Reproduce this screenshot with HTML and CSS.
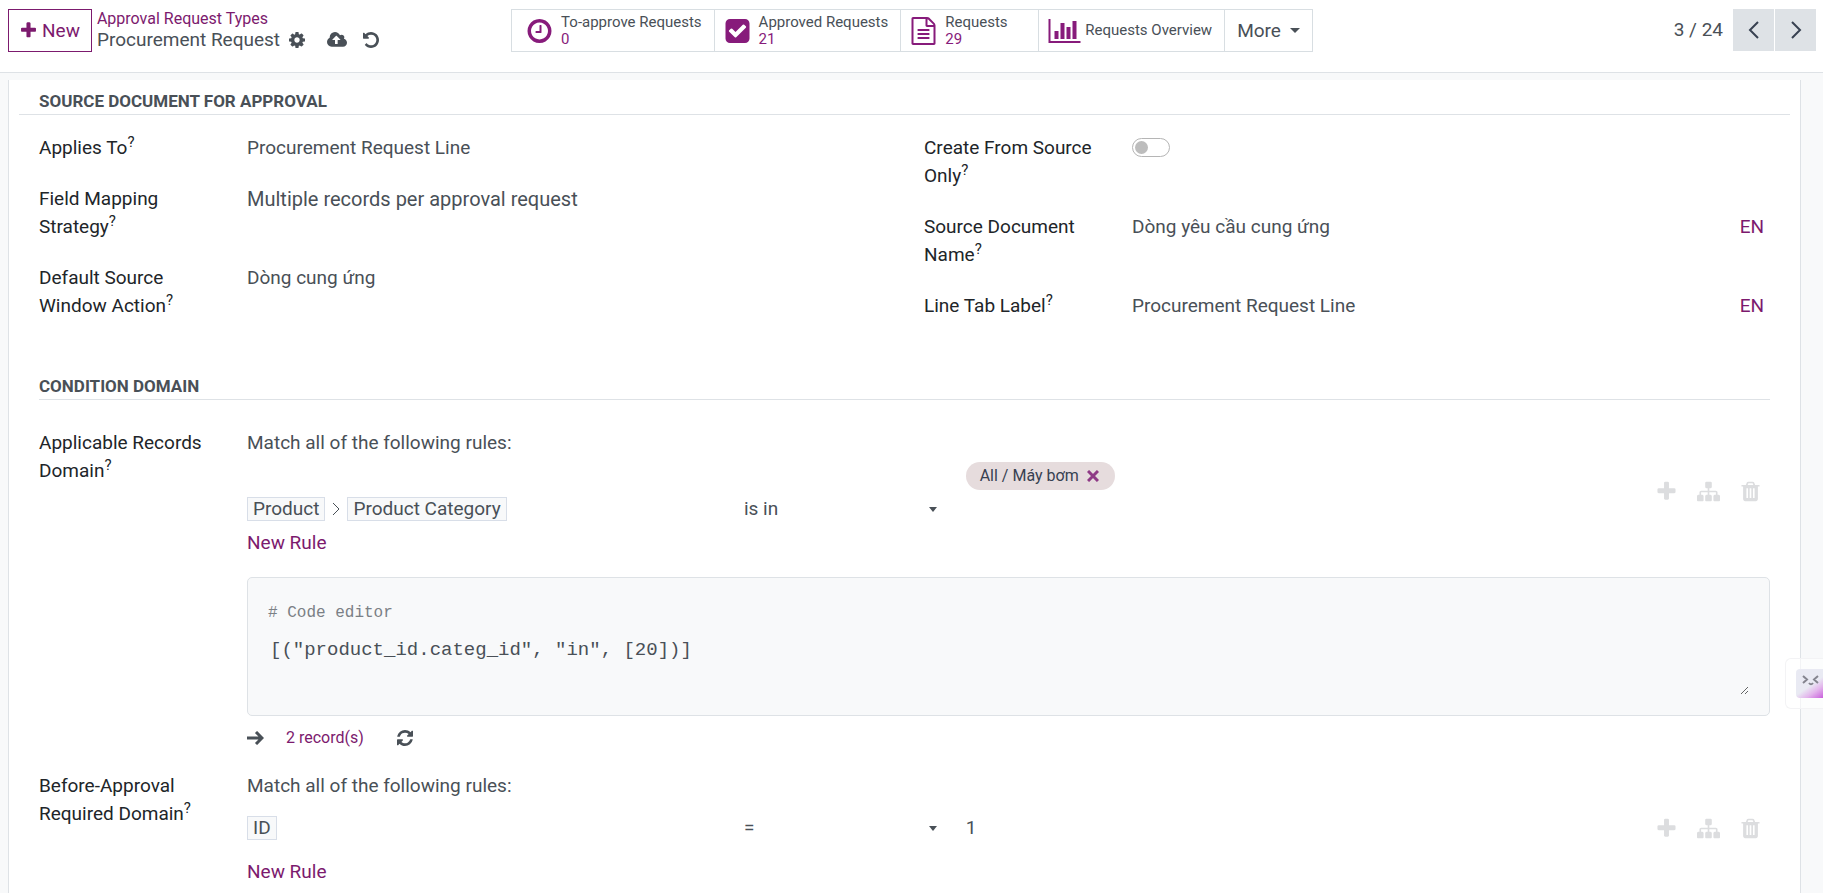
FILE: index.html
```html
<!DOCTYPE html>
<html lang="en">
<head>
    <meta charset="UTF-8">
    <meta name="viewport" content="width=device-width, initial-scale=1.0">
    <title>Procurement Request</title>
    <link rel="stylesheet" href="styles.css">
</head>
<body>
    <!-- icon sprite -->
    <svg class="sprite" aria-hidden="true">
        <symbol id="plus" viewBox="0 0 1792 1792"><path d="M1600 736v192q0 40-28 68t-68 28h-416v416q0 40-28 68t-68 28h-192q-40 0-68-28t-28-68v-416h-416q-40 0-68-28t-28-68v-192q0-40 28-68t68-28h416v-416q0-40 28-68t68-28h192q40 0 68 28t28 68v416h416q40 0 68 28t28 68z"/></symbol>
        <symbol id="cog" viewBox="128 128 1536 1536"><path d="M1152 896q0-106-75-181t-181-75-181 75-75 181 75 181 181 75 181-75 75-181zm512-109v222q0 12-8 23t-20 13l-185 28q-19 54-39 91 35 50 107 138 10 12 10 25t-9 23q-27 37-99 108t-94 71q-12 0-26-9l-138-108q-44 23-91 38-16 136-29 186-7 28-36 28h-222q-14 0-24.5-8.5t-11.5-21.5l-28-184q-49-16-90-37l-141 107q-10 9-25 9-14 0-25-11-126-114-165-168-7-10-7-23 0-12 8-23 15-21 51-66.5t54-70.5q-27-50-41-99l-183-27q-13-2-21-12.5t-8-23.5v-222q0-12 8-23t19-13l186-28q14-46 39-92-40-57-107-138-10-12-10-24 0-10 9-23 26-36 98.5-107.5t94.5-71.5q13 0 26 10l138 107q44-23 91-38 16-136 29-186 7-28 36-28h222q14 0 24.5 8.5t11.5 21.5l28 184q49 16 90 37l142-107q9-9 24-9 13 0 25 10 129 119 165 170 7 8 7 22 0 12-8 23-15 21-51 66.5t-54 70.5q26 50 41 98l183 28q13 2 21 12.5t8 23.5z"/></symbol>
        <symbol id="cloud" viewBox="0 128 1920 1536"><path d="M1280 864q0-14-9-23l-352-352q-9-9-23-9t-23 9l-351 351q-10 12-10 24 0 14 9 23t23 9h224v352q0 13 9.5 22.5t22.5 9.5h192q13 0 22.5-9.5t9.5-22.5v-352h224q13 0 22.5-9.5t9.5-22.5zm640 288q0 159-112.5 271.5t-271.5 112.5h-1088q-185 0-316.5-131.5t-131.5-316.5q0-130 70-240t188-165q-2-30-2-43 0-212 150-362t362-150q156 0 285.5 87t188.5 231q71-62 166-62 106 0 181 75t75 181q0 76-41 138 130 31 213.5 135.5t83.5 238.5z"/></symbol>
        <symbol id="undo" viewBox="128 128 1536 1536"><path d="M1664 896q0 156-61 298t-164 245-245 164-298 61q-172 0-327-72.5t-264-204.5q-7-10-6.5-22.5t8.5-20.5l137-138q10-9 25-9 16 2 23 12 73 95 179 147t225 52q104 0 198.5-40.5t163.5-109.5 109.5-163.5 40.5-198.5-40.5-198.5-109.5-163.5-163.5-109.5-198.5-40.5q-98 0-188 35.5t-160 101.5l137 138q31 30 14 69-17 40-59 40h-448q-26 0-45-19t-19-45v-448q0-42 40-59 39-17 69 14l130 129q107-101 244.5-156.5t284.5-55.5q156 0 298 61t245 164 164 245 61 298z"/></symbol>
        <symbol id="clock" viewBox="128 0 1536 1792"><path d="M1024 544v448q0 14-9 23t-23 9h-320q-14 0-23-9t-9-23v-64q0-14 9-23t23-9h224v-352q0-14 9-23t23-9h64q14 0 23 9t9 23zm416 352q0-148-73-273t-198-198-273-73-273 73-198 198-73 273 73 273 198 198 273 73 273-73 198-198 73-273zm224 0q0 209-103 385.5t-279.5 279.5-385.5 103-385.5-103-279.5-279.5-103-385.5 103-385.5 279.5-279.5 385.5-103 385.5 103 279.5 279.5 103 385.5z"/></symbol>
        <symbol id="check" viewBox="128 0 1536 1792"><path d="M813 1299l614-614q19-19 19-45t-19-45l-102-102q-19-19-45-19t-45 19l-467 467-211-211q-19-19-45-19t-45 19l-102 102q-19 19-19 45t19 45l358 358q19 19 45 19t45-19zm851-883v960q0 119-84.5 203.5t-203.5 84.5h-960q-119 0-203.5-84.5t-84.5-203.5v-960q0-119 84.5-203.5t203.5-84.5h960q119 0 203.5 84.5t84.5 203.5z"/></symbol>
        <symbol id="file" viewBox="128 0 1536 1792"><path d="M1596 380q28 28 48 76t20 88v1152q0 40-28 68t-68 28h-1344q-40 0-68-28t-28-68v-1600q0-40 28-68t68-28h896q40 0 88 20t76 48zm-444-244v376h376q-10-29-22-41l-313-313q-12-12-41-22zm384 1528v-1024h-416q-40 0-68-28t-28-68v-416h-768v1536h1280zm-1024-864q0-14 9-23t23-9h704q14 0 23 9t9 23v64q0 14-9 23t-23 9h-704q-14 0-23-9t-9-23v-64zm736 224q14 0 23 9t9 23v64q0 14-9 23t-23 9h-704q-14 0-23-9t-9-23v-64q0-14 9-23t23-9h704zm0 256q14 0 23 9t9 23v64q0 14-9 23t-23 9h-704q-14 0-23-9t-9-23v-64q0-14 9-23t23-9h704z"/></symbol>
        <symbol id="chart" viewBox="0 0 2048 1792"><path d="M640 896v512h-256v-512h256zm384-512v1024h-256v-1024h256zm1024 1152v128h-2048v-1536h128v1408h1920zm-640-896v768h-256v-768h256zm384-384v1152h-256v-1152h256z"/></symbol>
        <symbol id="sitemap" viewBox="0 0 1792 1792"><path d="M1792 1248v320q0 40-28 68t-68 28h-320q-40 0-68-28t-28-68v-320q0-40 28-68t68-28h96v-192h-512v192h96q40 0 68 28t28 68v320q0 40-28 68t-68 28h-320q-40 0-68-28t-28-68v-320q0-40 28-68t68-28h96v-192h-512v192h96q40 0 68 28t28 68v320q0 40-28 68t-68 28h-320q-40 0-68-28t-28-68v-320q0-40 28-68t68-28h96v-192q0-52 38-90t90-38h512v-192h-96q-40 0-68-28t-28-68v-320q0-40 28-68t68-28h320q40 0 68 28t28 68v320q0 40-28 68t-68 28h-96v192h512q52 0 90 38t38 90v192h96q40 0 68 28t28 68z"/></symbol>
        <symbol id="trash" viewBox="0 0 1792 1792"><path d="M704 1376v-704q0-14-9-23t-23-9h-64q-14 0-23 9t-9 23v704q0 14 9 23t23 9h64q14 0 23-9t9-23zm256 0v-704q0-14-9-23t-23-9h-64q-14 0-23 9t-9 23v704q0 14 9 23t23 9h64q14 0 23-9t9-23zm256 0v-704q0-14-9-23t-23-9h-64q-14 0-23 9t-9 23v704q0 14 9 23t23 9h64q14 0 23-9t9-23zm-544-992h448l-48-117q-7-9-17-11h-317q-10 2-17 11zm928 32v64q0 14-9 23t-23 9h-96v948q0 83-47 143.5t-113 60.5h-832q-66 0-113-58.5t-47-141.5v-952h-96q-14 0-23-9t-9-23v-64q0-14 9-23t23-9h309l70-167q15-37 54-63t79-26h320q40 0 79 26t54 63l70 167h309q14 0 23 9t9 23z"/></symbol>
        <symbol id="refresh" viewBox="128 128 1536 1536"><path d="M1639 1056q0 5-1 7-64 268-268 434.5t-478 166.5q-146 0-282.5-55t-243.5-157l-129 129q-19 19-45 19t-45-19-19-45v-448q0-26 19-45t45-19h448q26 0 45 19t19 45-19 45l-137 137q71 66 161 102t187 36q134 0 250-65t186-179q11-17 53-117 8-23 30-23h192q13 0 22.5 9.5t9.5 22.5zm25-800v448q0 26-19 45t-45 19h-448q-26 0-45-19t-19-45 19-45l138-138q-148-137-349-137-134 0-250 65t-186 179q-11 17-53 117-8 23-30 23h-199q-13 0-22.5-9.5t-9.5-22.5v-7q65-268 270-434.5t480-166.5q146 0 284 55.5t245 156.5l130-129q19-19 45-19t45 19 19 45z"/></symbol>
    </svg>

    <header class="control-panel">
        <div class="panel-left">
            <button class="btn-new"><svg class="icon-plus"><use href="#plus"/></svg>New</button>
            <div class="breadcrumb">
                <a href="#">Approval Request Types</a>
                <div class="current">
                    <span>Procurement Request</span>
                    <button class="btn-icon" aria-label="Actions"><svg class="icon"><use href="#cog"/></svg></button>
                    <button class="btn-icon cloud" aria-label="Save"><svg class="icon"><use href="#cloud"/></svg></button>
                    <button class="btn-icon" aria-label="Discard"><svg class="icon"><use href="#undo"/></svg></button>
                </div>
            </div>
        </div>

        <div class="stat-buttons">
            <button class="stat"><svg class="stat-icon"><use href="#clock"/></svg><span>To-approve Requests<b>0</b></span></button>
            <button class="stat"><svg class="stat-icon"><use href="#check"/></svg><span>Approved Requests<b>21</b></span></button>
            <button class="stat stat-requests"><svg class="stat-icon"><use href="#file"/></svg><span>Requests<b>29</b></span></button>
            <button class="stat stat-overview"><svg class="stat-icon wide"><use href="#chart"/></svg><span>Requests Overview</span></button>
            <button class="stat stat-more">More<i class="caret"></i></button>
        </div>

        <div class="pager">
            <span>3 / 24</span>
            <div class="pager-buttons">
                <button aria-label="Previous"><svg viewBox="0 0 12 20"><path d="M10 2L2 10l8 8"/></svg></button>
                <button aria-label="Next"><svg viewBox="0 0 12 20"><path d="M2 2l8 8-8 8"/></svg></button>
            </div>
        </div>
    </header>

    <main class="content">
        <div class="sheet">
            <h2 class="separator wide-separator">Source Document for Approval</h2>
            <div class="groups">
                <div class="group">
                    <div class="field">
                        <label for="applies">Applies To<sup>?</sup></label>
                        <input id="applies" type="text" value="Procurement Request Line">
                    </div>
                    <div class="field">
                        <label for="strategy">Field Mapping Strategy<sup>?</sup></label>
                        <select id="strategy" class="selection"><option>Multiple records per approval request</option></select>
                    </div>
                    <div class="field">
                        <label for="action">Default Source Window Action<sup>?</sup></label>
                        <input id="action" type="text" value="Dòng cung ứng">
                    </div>
                </div>
                <div class="group">
                    <div class="field">
                        <label for="only">Create From Source Only<sup>?</sup></label>
                        <input id="only" class="switch" type="checkbox">
                    </div>
                    <div class="field">
                        <label for="docname">Source Document Name<sup>?</sup></label>
                        <div class="translate">
                            <input id="docname" type="text" value="Dòng yêu cầu cung ứng">
                            <button class="link">EN</button>
                        </div>
                    </div>
                    <div class="field">
                        <label for="tablabel">Line Tab Label<sup>?</sup></label>
                        <div class="translate">
                            <input id="tablabel" type="text" value="Procurement Request Line">
                            <button class="link">EN</button>
                        </div>
                    </div>
                </div>
            </div>

            <div class="domains">
                <h2 class="separator">Condition Domain</h2>
                <div class="field domain">
                    <label for="code">Applicable Records Domain<sup>?</sup></label>
                    <div>
                        <p>Match all of the following rules:</p>
                        <div class="rule rule-tags">
                            <div class="path">
                                <span class="chip">Product</span>
                                <svg class="path-arrow" viewBox="0 0 8 14"><path d="M1 1l6 6-6 6"/></svg>
                                <span class="chip">Product Category</span>
                            </div>
                            <div class="operator">
                                <select aria-label="Operator"><option>is in</option></select>
                                <i class="caret"></i>
                            </div>
                            <div class="value">
                                <span class="tag">All / Máy bơm<button aria-label="Delete"><svg viewBox="0 0 12 12"><path d="M1 1l10 10M11 1L1 11"/></svg></button></span>
                            </div>
                            <div class="rule-actions">
                                <button aria-label="Add rule"><svg><use href="#plus"/></svg></button>
                                <button aria-label="Add branch"><svg><use href="#sitemap"/></svg></button>
                                <button aria-label="Delete rule"><svg><use href="#trash"/></svg></button>
                            </div>
                        </div>
                        <button class="link">New Rule</button>
                        <div class="code-editor">
                            <span># Code editor</span>
                            <textarea id="code" spellcheck="false">[("product_id.categ_id", "in", [20])]</textarea>
                        </div>
                        <div class="records">
                            <svg class="arrow" viewBox="0 0 17 14"><path d="M0 7h15M9 1l6 6-6 6"/></svg>
                            <button class="link small">2 record(s)</button>
                            <button class="btn-icon" aria-label="Refresh"><svg class="icon"><use href="#refresh"/></svg></button>
                        </div>
                    </div>
                </div>

                <div class="field domain">
                    <label for="idvalue">Before-Approval Required Domain<sup>?</sup></label>
                    <div>
                        <p>Match all of the following rules:</p>
                        <div class="rule">
                            <div class="path"><span class="chip">ID</span></div>
                            <div class="operator">
                                <select aria-label="Operator"><option>=</option></select>
                                <i class="caret"></i>
                            </div>
                            <div class="value"><input id="idvalue" type="text" value="1"></div>
                            <div class="rule-actions">
                                <button aria-label="Add rule"><svg><use href="#plus"/></svg></button>
                                <button aria-label="Add branch"><svg><use href="#sitemap"/></svg></button>
                                <button aria-label="Delete rule"><svg><use href="#trash"/></svg></button>
                            </div>
                        </div>
                        <button class="link">New Rule</button>
                    </div>
                </div>
            </div>
        </div>
    </main>

    <!-- assistant widget docked on the right edge -->
    <div class="assistant">
        <button aria-label="Assistant">
            <svg viewBox="0 0 18 12"><path d="M1 1l4 3.500-4 3.500M16 1l-4 3.500 4 3.500M7 8q2 2.500 4 0"/></svg>
        </button>
    </div>
</body>
</html>
```

FILE: styles.css
```css
* {
    box-sizing: border-box;
}
body {
    margin: 0;
    height: 100vh;
    display: flex;
    flex-direction: column;
    overflow: hidden;
    background-color: #f8f9fa;
    color: #495057;
    font-family: Roboto, "Noto Sans", sans-serif;
    font-size: 19px;
    line-height: 28px;
}
button, input, select, textarea {
    margin: 0;
    padding: 0;
    border: none;
    outline: none;
    background: none;
    color: inherit;
    font: inherit;
}
button {
    cursor: pointer;
}
a {
    color: #7c1a6e;
    text-decoration: none;
}
svg {
    display: block;
    fill: currentColor;
}
.sprite {
    display: none;
}
.icon {
    width: 16px;
    height: 16px;
}
.cloud .icon {
    width: 20px;
}
.caret {
    width: 0;
    height: 0;
    border: 5px solid transparent;
    border-top-color: currentColor;
    border-bottom: none;
}

/* control panel */
.control-panel {
    flex: none;
    display: grid;
    grid-template-columns: 1fr auto 1fr;
    height: 73px;
    padding: 9px 7px 0 8px;
    background-color: white;
    border-bottom: 1px solid #dee2e6;
}
.panel-left {
    display: flex;
    align-items: flex-start;
    gap: 5px;
}
.btn-new {
    display: flex;
    align-items: center;
    gap: 4px;
    height: 43px;
    padding: 0 11px 0 10px;
    border: 1px solid #7c1a6e;
    color: #7c1a6e;
}
.icon-plus {
    width: 19px;
    height: 19px;
}
.breadcrumb {
    font-size: 16px;
    line-height: 20px;
}
.breadcrumb a {
    display: block;
}
.current {
    display: flex;
    align-items: center;
    line-height: 22px;
    font-size: 19px;
}
.btn-icon {
    margin-left: 9px;
}
.current .btn-icon + .btn-icon {
    margin-left: 16px;
}
.current .cloud.btn-icon {
    margin-left: 22px;
}
.stat-buttons {
    display: flex;
    height: 43px;
    border: 1px solid #d8dee2;
}
.stat {
    display: flex;
    align-items: center;
    gap: 9px;
    padding: 0 12px 0 10px;
    border-left: 1px solid #d8dee2;
    font-size: 15px;
    line-height: 17px;
    text-align: left;
}
.stat:first-child {
    border-left: none;
    padding-left: 15px;
}
.stat b {
    display: block;
    font-weight: 400;
    color: #871b7b;
}
.stat-requests {
    min-width: 138px;
}
.stat-overview {
    gap: 4px;
    padding-left: 9px;
}
.stat-more {
    padding-left: 12px;
    font-size: 19px;
}
.stat-icon {
    width: 25px;
    height: 28px;
    color: #871b7b;
}
.wide {
    width: 33px;
}
.pager {
    display: flex;
    justify-content: flex-end;
    align-items: flex-start;
    gap: 10px;
    line-height: 42px;
}
.pager-buttons {
    display: flex;
    gap: 1px;
}
.pager-buttons button {
    display: flex;
    align-items: center;
    justify-content: center;
    width: 41px;
    height: 42px;
    background-color: #dee2e6;
}
.pager-buttons svg {
    width: 12px;
    height: 20px;
    fill: none;
    stroke: #374151;
    stroke-width: 2;
}

/* form sheet */
.content {
    flex: 1;
    min-height: 0;
    margin-right: 3px;
    padding: 7px 19px 0 8px;
}
.sheet {
    height: 100%;
    padding: 6px 10px 0;
    background-color: white;
    border: 1px solid #dee2e6;
    border-width: 0 1px;
}
.separator {
    margin: 0;
    padding-top: 2px;
    border-bottom: 1px solid #dee2e6;
    font-size: 17px;
    line-height: 26px;
    font-weight: 700;
    text-transform: uppercase;
}
.wide-separator {
    padding-left: 20px;
}
.groups {
    display: grid;
    grid-template-columns: 1fr 1fr;
    gap: 39px;
    margin: 19px 20px 51px;
}
.group {
    display: flex;
    flex-direction: column;
    gap: 23px;
}
.field {
    display: grid;
    grid-template-columns: 180px 1fr;
    gap: 28px;
    align-items: start;
}
.field label {
    color: #212529;
}
sup {
    font-size: 15px;
    line-height: 0;
}
input, select {
    width: 100%;
    height: 28px;
    appearance: none;
}
.selection {
    font-size: 20px;
}
.translate {
    display: flex;
    padding-right: 6px;
}
.link {
    color: #7c1a6e;
}
.switch {
    position: relative;
    width: 38px;
    height: 19px;
    margin-top: 4px;
    border: 1px solid #b5b5b5;
    border-radius: 10px;
}
.switch::before {
    content: "";
    position: absolute;
    left: 2px;
    top: 2px;
    width: 13px;
    height: 13px;
    border-radius: 50%;
    background-color: #bdbdbd;
}

/* domain editor */
.domains {
    margin: 0 20px;
}
.domain {
    margin-top: 20px;
}
.separator + .domain {
    margin-top: 29px;
}
.domain p {
    margin: 0;
}
.rule {
    display: grid;
    grid-template-columns: 26fr 11fr 36fr 124px;
    gap: 20px;
    align-items: center;
    height: 58px;
    padding-bottom: 2px;
}
.rule-tags {
    height: 72px;
    padding-bottom: 4px;
}
.rule-tags .path, .rule-tags .operator {
    padding-top: 36px;
}
.rule-tags .value {
    align-self: start;
    padding-top: 4px;
}
.path {
    display: flex;
    align-items: center;
    gap: 7px;
}
.chip {
    padding: 0 5px;
    border: 1px solid #d8dee8;
    background-color: #f8f9fa;
    line-height: 22px;
}
.path-arrow {
    width: 8px;
    height: 14px;
    fill: none;
    stroke: currentColor;
}
.operator {
    display: flex;
    align-items: center;
    padding-right: 9px;
}
.operator .caret {
    border-width: 5px 4px 0;
}
.tag {
    display: inline-flex;
    align-items: center;
    gap: 8px;
    height: 28px;
    padding: 0 16px 0 14px;
    border-radius: 14px;
    background-color: #e6dcdd;
    color: #374151;
    font-size: 16px;
}
.tag svg {
    width: 12px;
    height: 12px;
    stroke: #8f3a86;
    stroke-width: 3;
}
.rule-actions {
    display: flex;
    justify-content: flex-end;
    gap: 19px;
    padding-right: 8px;
    color: #dcdddf;
}
.rule-actions svg {
    width: 23px;
    height: 23px;
}
.code-editor {
    margin-top: 20px;
    padding: 21px 20px 20px;
    border: 1px solid #dee2e6;
    border-radius: 5px;
    background-color: #f8f9fa;
    font-family: "Liberation Mono", monospace;
}
.code-editor span {
    display: block;
    color: #7b8085;
    font-size: 16px;
}
.code-editor textarea {
    display: block;
    width: 100%;
    height: 61px;
    margin-top: 7px;
    padding: 2px;
    resize: vertical;
}
.records {
    display: flex;
    align-items: center;
    height: 28px;
    margin-top: 8px;
}
.arrow {
    width: 17px;
    height: 14px;
    margin-right: 22px;
    fill: none;
    stroke: currentColor;
    stroke-width: 3;
}
.small {
    margin-right: 24px;
    font-size: 16px;
}

.assistant {
    position: fixed;
    right: 0;
    top: 658px;
    padding: 10px 0 10px 10px;
    border: 1px solid #f3f3f5;
    border-right: none;
    border-radius: 6px 0 0 6px;
    background-color: rgba(255, 255, 255, 0.6);
}
.assistant button {
    display: block;
    width: 27px;
    height: 29px;
    padding: 0 0 5px 6px;
    border-radius: 4px 0 0 4px;
    background: linear-gradient(145deg, #e9eaf3 55%, #e3b5ec 75%, #c95fdc);
}
.assistant svg {
    width: 18px;
    height: 12px;
    fill: none;
    stroke: #85858f;
    stroke-width: 2;
}
```
